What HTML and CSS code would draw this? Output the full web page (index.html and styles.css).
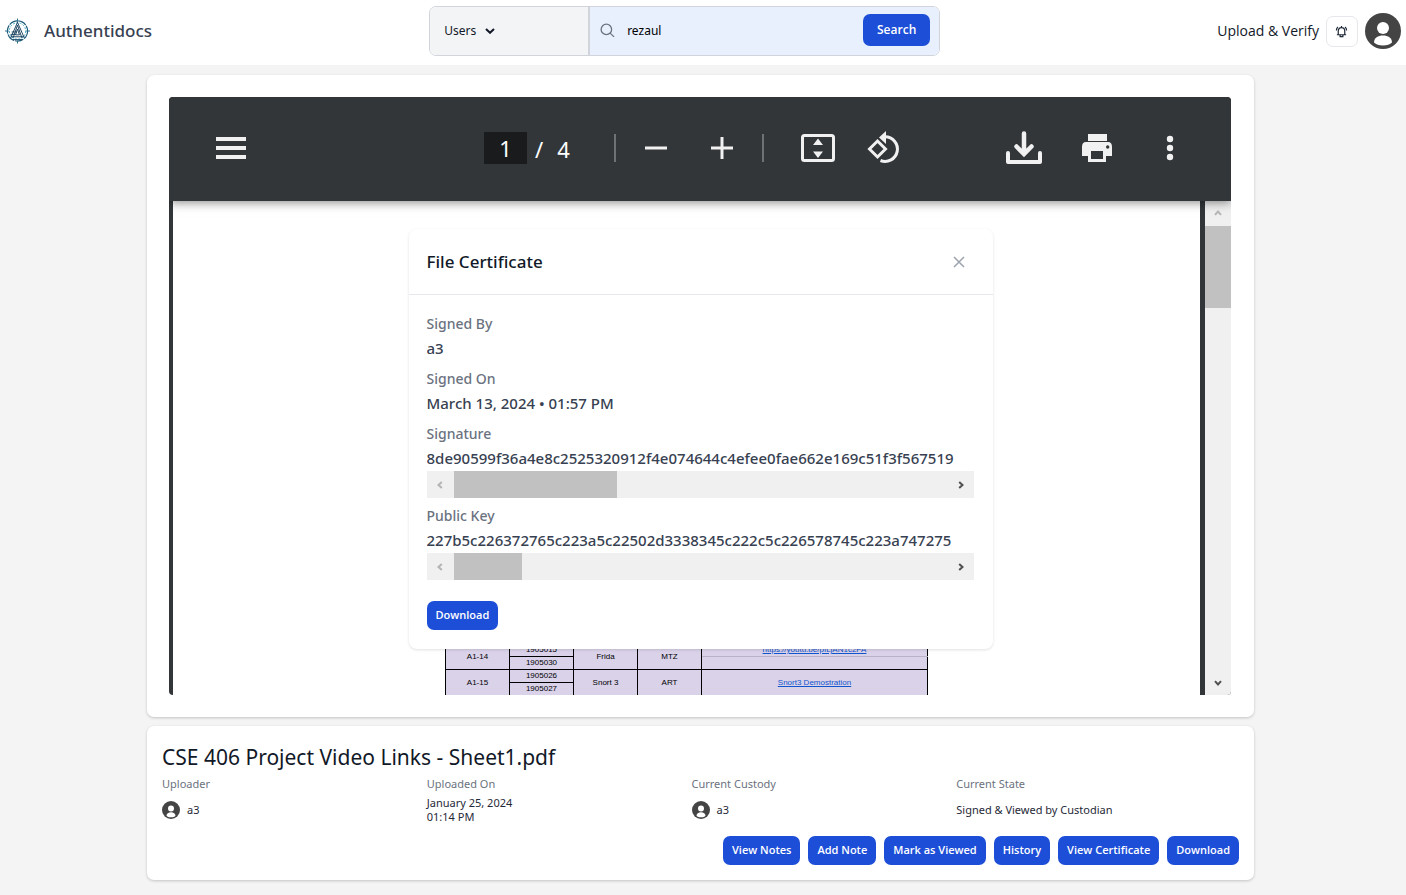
FILE: index.html
```html
<!DOCTYPE html>
<html lang="en">
<head>
<meta charset="utf-8">
<meta name="viewport" content="width=device-width, initial-scale=1">
<title>Authentidocs</title>
<link rel="stylesheet" href="styles.css">
</head>
<body>
<svg class="sprite" aria-hidden="true">
  <symbol id="avatar" viewBox="0 0 36 36">
    <circle cx="18" cy="18" r="18" fill="#444"/>
    <circle cx="18" cy="15" r="6" fill="#fff"/>
    <path d="M9 29.500C9 25 13 22.500 18 22.500S27 25 27 29.500C25 31.500 22 32.500 18 32.500S11 31.500 9 29.500Z" fill="#fff"/>
  </symbol>
  <symbol id="chev" viewBox="0 0 8 8">
    <path d="M5.800 1 2.500 4 5.800 7" fill="none" stroke="currentColor" stroke-width="2"/>
  </symbol>
</svg>

<header class="topbar">
  <a class="brand" href="#">
    <svg class="brand-logo" viewBox="0 0 26 26" fill="none" aria-hidden="true">
      <circle cx="13" cy="13" r="10.500" stroke="#1c5a78" stroke-width="1.200" stroke-dasharray="9 1"/>
      <circle cx="13" cy="13" r="8.500" stroke="#3fa9c9" stroke-width="1" stroke-dasharray="2 1.500"/>
      <path d="M0 13H4M22 13H26M13 0V4M13 23V26" stroke="#2b6f8c"/>
      <path d="M13 4 6 20M13 4 20 20M13 7 8.500 20M13 7 17.500 20M13 11 11 17H15Z" stroke="#173f5c" stroke-width="1"/>
      <path d="M7 14H12M6 16.500H11M6 19H20M8 22H18" stroke="#173f5c" stroke-width="1"/>
    </svg>
    <span class="brand-name">Authentidocs</span>
  </a>

  <form class="search" role="search">
    <div class="search-scope">
      <select aria-label="Search in"><option>Users</option><option>Files</option></select>
      <svg viewBox="0 0 10 6" aria-hidden="true"><path d="M1 1 5 4.800 9 1" fill="none" stroke="#111827" stroke-width="2"/></svg>
    </div>
    <div class="search-field">
      <svg viewBox="0 0 16 16" fill="none" stroke="#6b7280" stroke-width="1.400" aria-hidden="true"><circle cx="6.800" cy="6.800" r="5.600"/><path d="M10.800 10.800 15 14.800"/></svg>
      <input type="text" value="rezaul" aria-label="Search">
      <button class="btn btn-search" type="button">Search</button>
    </div>
  </form>

  <nav class="account">
    <a class="verify" href="#">Upload &amp; Verify</a>
    <button class="bell" type="button" aria-label="Notifications">
      <svg viewBox="0 0 14 14" fill="none" stroke="#1f2937" stroke-width="1.300"><path d="M7 1V2.500M3.500 10.500V6.500C3.500 4 5 2.800 7 2.800S10.500 4 10.500 6.500V10.500M2 10.500H12M5.500 11V12.500H8.500V11M3.200 2.200C2 3.200 1.500 4.500 1.500 6M10.800 2.200C12 3.200 12.500 4.500 12.500 6"/></svg>
    </button>
    <button class="profile" type="button" aria-label="Profile"><svg><use href="#avatar"/></svg></button>
  </nav>
</header>

<main class="content">
  <section class="card preview">
    <div class="viewer">
      <div class="toolbar">
        <div class="tools">
          <button class="tool" type="button" aria-label="Menu"><svg viewBox="0 0 44 44"><path d="M7 11h30v4H7zM7 20h30v4H7zM7 29h30v4H7z"/></svg></button>
        </div>
        <div class="tools tools-mid">
          <input class="page-no" type="text" value="1" aria-label="Page number">
          <span class="page-of"><span>/</span><span>4</span></span>
          <span class="rule"></span>
          <button class="tool" type="button" aria-label="Zoom out"><svg viewBox="0 0 44 44"><path d="M11 20.500h22v3H11z"/></svg></button>
          <button class="tool tool-spaced" type="button" aria-label="Zoom in"><svg viewBox="0 0 44 44"><path d="M11 20.500h9.500V11h3v9.500H33v3h-9.500V33h-3v-9.500H11z"/></svg></button>
          <span class="rule"></span>
          <button class="tool tool-fit" type="button" aria-label="Fit to page"><svg viewBox="0 0 44 44"><rect x="6.500" y="9.500" width="31" height="25" rx="2" fill="none" stroke="#f1f1f1" stroke-width="3"/><path d="M22 12.500l5 6.500H17zM22 32l5-6.500H17z"/></svg></button>
          <button class="tool tool-spaced" type="button" aria-label="Rotate"><svg viewBox="0 0 44 44"><path d="M23 10.800A12.300 12.300 0 1 1 18.500 34.500" fill="none" stroke="#f1f1f1" stroke-width="3"/><path d="M15.500 15l8 8-8 8-8-8z" fill="none" stroke="#f1f1f1" stroke-width="3"/><path d="M24 5V18L17 11.500z"/></svg></button>
        </div>
        <div class="tools tools-end">
          <button class="tool" type="button" aria-label="Download"><svg viewBox="0 0 44 44"><path d="M22 7.500V26M14.500 20.500 22 28 29.500 20.500" fill="none" stroke="#f1f1f1" stroke-width="4.500" stroke-linecap="round"/><path d="M6 27V36H38V27" fill="none" stroke="#f1f1f1" stroke-width="4" stroke-linecap="round" stroke-linejoin="round"/></svg></button>
          <button class="tool" type="button" aria-label="Print"><svg viewBox="0 0 44 44"><path fill-rule="evenodd" d="M13 8h19v7H13zM11 16h22q4 0 4 5v9h-6v6H13v-6H7v-9q0-5 4-5zM16 25v8h12v-8zM31 21a1.700 1.700 0 1 0 3.400 0a1.700 1.700 0 1 0-3.400 0z"/></svg></button>
          <button class="tool" type="button" aria-label="More"><svg viewBox="0 0 44 44"><circle cx="22" cy="13" r="3.200"/><circle cx="22" cy="22" r="3.200"/><circle cx="22" cy="31" r="3.200"/></svg></button>
        </div>
      </div>
      <div class="stage">
        <div class="sheet">
          <table class="links">
            <colgroup><col class="c-id"><col class="c-id"><col class="c-id"><col class="c-id"><col class="c-link"></colgroup>
            <tr><td rowspan="2">A1-14</td><td>1905015</td><td rowspan="2">Frida</td><td rowspan="2">MTZ</td><td class="soft"><a href="#">https://youtu.be/pILjAN1c2PA</a></td></tr>
            <tr><td>1905030</td><td class="soft-top"></td></tr>
            <tr><td rowspan="2">A1-15</td><td>1905026</td><td rowspan="2">Snort 3</td><td rowspan="2">ART</td><td rowspan="2"><a href="#">Snort3 Demostration</a></td></tr>
            <tr><td>1905027</td></tr>
          </table>
        </div>
        <div class="vbar">
          <svg class="up off"><use href="#chev"/></svg>
          <span class="vthumb"></span>
          <svg class="down"><use href="#chev"/></svg>
        </div>
      </div>
    </div>

    <div class="dialog" role="dialog" aria-labelledby="cert-title">
      <div class="dialog-head">
        <h2 id="cert-title">File Certificate</h2>
        <button class="close" type="button" aria-label="Close"><svg viewBox="0 0 12 12"><path d="M1 1 11 11M11 1 1 11" stroke="#9ca3af" stroke-width="1.500"/></svg></button>
      </div>
      <div class="dialog-body">
        <dl class="facts">
          <div><dt>Signed By</dt><dd>a3</dd></div>
          <div><dt>Signed On</dt><dd>March 13, 2024 • 01:57 PM</dd></div>
          <div>
            <dt>Signature</dt>
            <dd>8de90599f36a4e8c2525320912f4e074644c4efee0fae662e169c51f3f567519</dd>
            <dd class="hbar"><svg class="off"><use href="#chev"/></svg><span class="hthumb"></span><svg class="right"><use href="#chev"/></svg></dd>
          </div>
          <div>
            <dt>Public Key</dt>
            <dd>227b5c226372765c223a5c22502d3338345c222c5c226578745c223a747275</dd>
            <dd class="hbar"><svg class="off"><use href="#chev"/></svg><span class="hthumb hthumb-short"></span><svg class="right"><use href="#chev"/></svg></dd>
          </div>
        </dl>
        <button class="btn" type="button">Download</button>
      </div>
    </div>
  </section>

  <section class="card details">
    <h1>CSE 406 Project Video Links - Sheet1.pdf</h1>
    <dl class="meta">
      <div><dt>Uploader</dt><dd><svg><use href="#avatar"/></svg>a3</dd></div>
      <div><dt>Uploaded On</dt><dd>January 25, 2024<br>01:14 PM</dd></div>
      <div><dt>Current Custody</dt><dd><svg><use href="#avatar"/></svg>a3</dd></div>
      <div><dt>Current State</dt><dd>Signed &amp; Viewed by Custodian</dd></div>
    </dl>
    <div class="actions">
      <button class="btn" type="button">View Notes</button>
      <button class="btn" type="button">Add Note</button>
      <button class="btn" type="button">Mark as Viewed</button>
      <button class="btn" type="button">History</button>
      <button class="btn" type="button">View Certificate</button>
      <button class="btn" type="button">Download</button>
    </div>
  </section>
</main>
</body>
</html>
```
FILE: styles.css
```css
* { box-sizing: border-box; }
body {
  margin: 0;
  min-height: 100vh;
  background: #f4f4f4;
  color: #1f2937;
  font: 14px/20px "Noto Sans", "Open Sans", sans-serif;
}
h1, h2, dl, dd { margin: 0; }
button, input, select { font: inherit; }
button { border: 0; padding: 0; background: none; cursor: pointer; }
a { color: inherit; text-decoration: none; }
svg { display: block; }
.sprite { position: absolute; width: 0; height: 0; }

.btn {
  height: 29px;
  padding: 0 9px 1px;
  border-radius: 7px;
  background: #1d4ed8;
  color: #fff;
  font: 600 11px/16px "Open Sans", sans-serif;
}

/* Top bar */
.topbar {
  display: flex;
  align-items: center;
  justify-content: space-between;
  height: 65px;
  padding: 0 5px 3px;
  background: #fff;
}
.brand { display: flex; align-items: center; gap: 14px; }
.brand-logo { width: 25px; height: 26px; }
.brand-name { font-size: 17px; font-weight: 500; line-height: 24px; color: #374151; }

.search {
  display: flex;
  width: 511px;
  height: 50px;
  border: 1px solid #d1d5db;
  border-radius: 7px;
  overflow: hidden;
}
.search-scope { position: relative; width: 160px; border-right: 2px solid #d1d5db; }
.search-scope select {
  appearance: none;
  width: 100%;
  height: 100%;
  padding: 0 14px;
  border: 0;
  background: #f3f4f6;
  color: #111827;
  font-size: 12px;
}
.search-scope svg { position: absolute; left: 55px; top: 21px; width: 10px; height: 6px; }
.search-field {
  flex: 1;
  display: flex;
  align-items: center;
  gap: 12px;
  padding: 0 9px 2px 10px;
  background: #e8f0fe;
}
.search-field svg { width: 15px; height: 15px; }
.search-field input {
  flex: 1;
  min-width: 0;
  padding: 2px 0 0;
  border: 0;
  background: none;
  color: #000;
  font-size: 12px;
}
.btn-search { width: 67px; height: 32px; font-size: 12px; }

.account { display: flex; align-items: center; gap: 7px; }
.verify { font: 14px/20px "Open Sans", sans-serif; color: #111827; }
.bell {
  display: grid;
  place-items: center;
  width: 32px;
  height: 31px;
  border: 1px solid #e5e7eb;
  border-radius: 7px;
}
.bell svg { width: 13px; height: 13px; }
.profile svg { width: 36px; height: 36px; }

/* Cards */
.content {
  display: flex;
  flex-direction: column;
  gap: 9px;
  padding: 10px 152px 14px 147px;
}
.card {
  position: relative;
  background: #fff;
  border-radius: 7px;
  box-shadow: 0 1px 3px rgba(0, 0, 0, .2);
}
.preview { padding: 22px 23px 22px 22px; }
.viewer { border-radius: 4px; overflow: hidden; background: #323639; }
.toolbar {
  position: relative;
  display: grid;
  grid-template-columns: 1fr auto 1fr;
  align-items: center;
  height: 104px;
  padding: 0 39px 2px 40px;
  background: #323639;
  box-shadow: 0 1px 10px rgba(0, 0, 0, .5);
}
.tools { display: flex; align-items: center; }
.tools-mid { padding-right: 11px; }
.tools-end { justify-content: flex-end; gap: 29px; }
.tool { width: 44px; height: 44px; }
.tool svg { width: 44px; height: 44px; fill: #f1f1f1; }
.tool-spaced { margin-left: 22px; }
.tool-fit { margin-left: 14px; }
.page-no {
  width: 43px;
  height: 32px;
  padding: 0;
  border: 0;
  background: #191b1c;
  color: #fff;
  font-size: 22px;
  text-align: center;
}
.page-of {
  display: flex;
  gap: 14px;
  width: 87px;
  padding: 2px 0 0 8px;
  color: #fff;
  font-size: 22px;
  line-height: 30px;
}
.rule { width: 2px; height: 28px; margin-right: 18px; background: #6f7274; }
.tool + .rule { margin-left: 18px; }

.stage { display: flex; height: 494px; padding-left: 4px; }
.sheet {
  flex: 1;
  margin-right: 5px;
  padding-top: 442px;
  background: #fff;
  overflow: hidden;
}
.links {
  width: 483px;
  margin: 0 auto;
  border-collapse: collapse;
  table-layout: fixed;
  background: #d9d2e9;
  color: #000;
  font: 8px/12px "Liberation Sans", Arial, sans-serif;
  text-align: center;
}
.links td { height: 13px; padding: 0; border: 1px solid #000; }
.links a { color: #1155cc; text-decoration: underline; }
.links .soft { border-bottom-color: #b9b3c8; }
.links .soft-top { border-top-color: #b9b3c8; }
.c-id { width: 64px; }
.vbar {
  display: flex;
  flex-direction: column;
  align-items: center;
  width: 26px;
  background: #f0f0f0;
  color: #505050;
}
.vbar svg { width: 8px; height: 8px; margin: 8px 0 9px; }
.vthumb { width: 26px; height: 82px; background: #c1c1c1; }
.up { transform: rotate(90deg); }
.vbar .down { margin: auto 0 8px; transform: rotate(-90deg); }
.off { color: #b4b4b4; }

/* Certificate dialog */
.dialog {
  position: absolute;
  top: 154px;
  left: 50%;
  width: 584px;
  margin-left: -292px;
  border-radius: 8px;
  background: #fff;
  box-shadow: 0 1px 3px rgba(0, 0, 0, .12);
}
.dialog-head {
  display: flex;
  align-items: center;
  justify-content: space-between;
  height: 66px;
  padding: 0 28px 0 18px;
  border-bottom: 1px solid #e5e7eb;
}
.dialog-head h2 { font-size: 17px; font-weight: 500; line-height: 24px; color: #111827; }
.close svg { width: 12px; height: 12px; }
.dialog-body { padding: 16px 19px 19px 18px; }
.facts { display: grid; gap: 5px; margin-bottom: 21px; }
.facts > div { min-width: 0; }
.facts dt { font: 500 14px/25px "Noto Sans", sans-serif; color: #6b7280; }
.facts dd {
  font-size: 15px;
  font-weight: 500;
  line-height: 25px;
  color: #374151;
  white-space: nowrap;
  overflow: hidden;
}
.facts .hbar {
  display: flex;
  align-items: center;
  height: 27px;
  padding: 0 9px;
  background: #f0f0f0;
  color: #505050;
}
.hbar svg { width: 8px; height: 8px; }
.hthumb { width: 163px; height: 27px; margin-left: 10px; background: #c1c1c1; }
.hthumb-short { width: 68px; }
.hbar .right { margin-left: auto; transform: rotate(180deg); }

/* File details */
.details { padding: 16px 15px 15px; }
.details h1 { font-size: 21px; font-weight: 400; line-height: 30px; color: #111827; }
.meta {
  display: grid;
  grid-template-columns: repeat(4, 1fr);
  padding-right: 18px;
  margin-bottom: 12px;
}
.meta > div { display: flex; flex-direction: column; }
.meta dt { font-size: 11px; line-height: 24px; color: #6b7280; }
.meta dd {
  display: flex;
  flex: 1;
  align-items: center;
  min-height: 28px;
  gap: 7px;
  font-size: 11px;
  line-height: 14px;
  color: #1f2937;
}
.meta svg { width: 18px; height: 18px; }
.actions { display: flex; justify-content: flex-end; gap: 8px; }
```
